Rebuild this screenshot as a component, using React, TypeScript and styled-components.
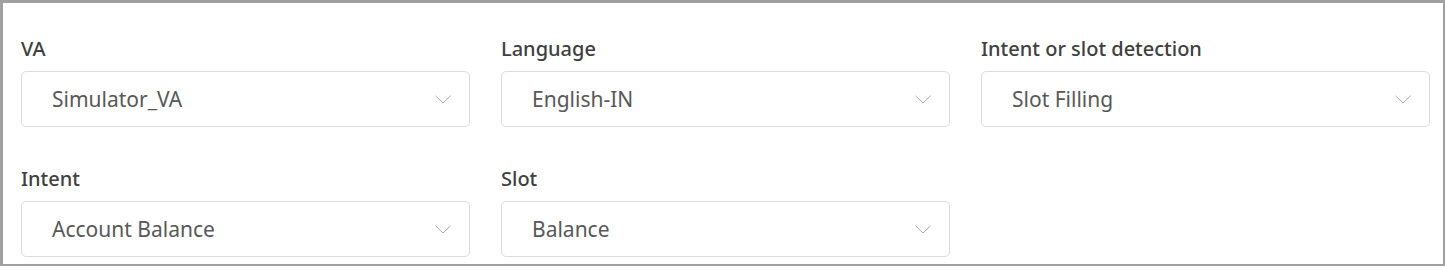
import styled, { createGlobalStyle } from "styled-components";

const GlobalStyle = createGlobalStyle`
    html, body {
        margin: 0;
        padding: 0;
        background: #ffffff;
    }
    body {
        font-family: "Noto Sans", "Open Sans", sans-serif;
    }
`;

const Panel = styled.div`
    width: 1445px;
    height: 266px;
    box-sizing: border-box;
    border-style: solid;
    border-color: #a0a0a0;
    border-width: 3px 2px 2px 3px;
    padding: 32px 0 0 18px;
    background: #ffffff;
`;

const Grid = styled.div`
    display: grid;
    grid-template-columns: repeat(3, 449px);
    column-gap: 31px;
    row-gap: 38px;
`;

const Field = styled.div`
    display: flex;
    flex-direction: column;
    gap: 9px;
`;

const Label = styled.label`
    font-size: 20px;
    line-height: 27px;
    font-weight: 500;
    color: #404040;
`;

const SelectBox = styled.div`
    height: 56px;
    box-sizing: border-box;
    border: 1px solid #dcdce4;
    border-radius: 5px;
    padding: 0 18px 0 30px;
    display: flex;
    align-items: center;
    justify-content: space-between;
    background: #ffffff;
`;

const Value = styled.span`
    font-size: 21px;
    line-height: 28px;
    color: #585858;
`;

const Chevron = () => (
    <svg width="16" height="9" viewBox="0 0 16 9" fill="none">
        <path d="M0.5 0.8 L8 8 L15.5 0.8" stroke="#a9a9b0" strokeWidth="1" />
    </svg>
);

const fields = [
    { label: "VA", value: "Simulator_VA" },
    { label: "Language", value: "English-IN" },
    { label: "Intent or slot detection", value: "Slot Filling" },
    { label: "Intent", value: "Account Balance" },
    { label: "Slot", value: "Balance" },
];

const App = () => {
    return (
        <>
            <GlobalStyle />
            <Panel>
                <Grid>
                    {fields.map((f) => (
                        <Field key={f.label}>
                            <Label>{f.label}</Label>
                            <SelectBox>
                                <Value>{f.value}</Value>
                                <Chevron />
                            </SelectBox>
                        </Field>
                    ))}
                </Grid>
            </Panel>
        </>
    );
};

export default App;
